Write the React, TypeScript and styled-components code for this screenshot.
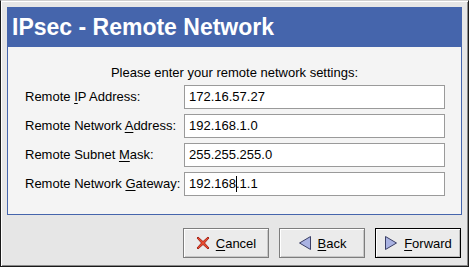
import { Fragment } from 'react';
import styled, { createGlobalStyle } from 'styled-components';

const Global = createGlobalStyle`
  html, body {
    margin: 0;
    padding: 0;
    background: #e6e6e6;
  }
  * {
    box-sizing: border-box;
  }
`;

const Window = styled.div`
  width: 469px;
  height: 267px;
  display: flex;
  flex-direction: column;
  padding: 6px 6px 8px 6px;
  background: #e6e6e6;
  border: 1px solid #1a1a1a;
  border-top-color: #cfcfcf;
  box-shadow: inset 1px 1px 0 #ffffff, inset -1px -1px 0 #8a8a8a;
  font-family: 'Liberation Sans', Arial, sans-serif;
  font-size: 13px;
  color: #000;
`;

const Panel = styled.div`
  height: 209px;
  border: 1px solid #4565ac;
  background: #f4f4f4;
  display: flex;
  flex-direction: column;
`;

const Header = styled.div`
  height: 39px;
  background: #4565ac;
  color: #fff;
  font-family: 'Liberation Sans', Arial, sans-serif;
  font-weight: bold;
  font-size: 23px;
  line-height: 38px;
  padding-left: 4px;
`;

const Prompt = styled.div`
  text-align: center;
  margin-top: 18px;
  line-height: 16px;
`;

const Fields = styled.div`
  display: grid;
  grid-template-columns: 159px 261px;
  row-gap: 5px;
  padding-left: 17px;
  margin-top: 4px;
`;

const Label = styled.div`
  height: 24px;
  line-height: 24px;
  white-space: pre;
`;

const Mnemonic = styled.span`
  text-decoration: underline;
  text-underline-offset: 2px;
`;

const Field = styled.div`
  height: 24px;
  line-height: 22px;
  background: #fff;
  border: 1px solid #9a9a9a;
  padding-left: 4px;
  white-space: pre;
`;

const Caret = styled.span`
  display: inline-block;
  width: 1px;
  height: 16px;
  background: #000;
  margin-right: -1px;
  vertical-align: -4px;
`;

const ButtonRow = styled.div`
  display: flex;
  justify-content: flex-end;
  gap: 10px;
  padding-top: 13px;
  padding-right: 1px;
`;

const Button = styled.div<{ $default?: boolean }>`
  width: 86px;
  height: 30px;
  display: flex;
  align-items: center;
  justify-content: center;
  gap: 6px;
  background: #ebebeb;
  border: 1px solid ${(p) => (p.$default ? '#000' : '#7d7d7d')};
  box-shadow: ${(p) =>
    p.$default
      ? 'inset 1px 1px 0 #fff, inset -1px -1px 0 #bdbdbd'
      : 'inset 1px 1px 0 #fff, inset -1px -1px 0 #c8c8c8'};
`;

const CancelIcon = () => (
  <svg width="14" height="14" viewBox="0 0 14 14">
    <path
      d="M2 1 L7 5.5 L12 1 L13 2 L8.5 7 L13 12 L12 13 L7 8.5 L2 13 L1 12 L5.5 7 L1 2 Z"
      fill="#ef4a2c"
      stroke="#9c1d12"
      strokeWidth="0.9"
      strokeLinejoin="round"
    />
  </svg>
);

const ArrowIcon = ({ dir }: { dir: 'left' | 'right' }) => (
  <svg width="14" height="16" viewBox="0 0 14 16">
    <path
      d={dir === 'left' ? 'M12.5 1.5 L12.5 14.5 L1.5 8 Z' : 'M1.5 1.5 L1.5 14.5 L12.5 8 Z'}
      fill="#a9b2e2"
      stroke="#3a3f66"
      strokeWidth="1"
      strokeLinejoin="round"
    />
  </svg>
);

const rows = [
  { pre: 'Remote ', key: 'I', post: 'P Address:', value: '172.16.57.27' },
  { pre: 'Remote Network ', key: 'A', post: 'ddress:', value: '192.168.1.0' },
  { pre: 'Remote Subnet ', key: 'M', post: 'ask:', value: '255.255.255.0' },
  { pre: 'Remote Network ', key: 'G', post: 'ateway:', value: '192.168.1.1' },
];

const App = () => {
  return (
    <>
      <Global />
      <Window>
        <Panel>
          <Header>IPsec - Remote Network</Header>
          <Prompt>Please enter your remote network settings:</Prompt>
          <Fields>
            {rows.map((r, i) => (
              <Fragment key={i}>
                <Label>
                  {r.pre}
                  <Mnemonic>{r.key}</Mnemonic>
                  {r.post}
                </Label>
                <Field>
                  {i === 3 ? (
                    <>
                      192.168
                      <Caret />
                      .1.1
                    </>
                  ) : (
                    r.value
                  )}
                </Field>
              </Fragment>
            ))}
          </Fields>
        </Panel>
        <ButtonRow>
          <Button>
            <CancelIcon />
            <span>
              <Mnemonic>C</Mnemonic>ancel
            </span>
          </Button>
          <Button>
            <ArrowIcon dir="left" />
            <span>
              <Mnemonic>B</Mnemonic>ack
            </span>
          </Button>
          <Button $default>
            <ArrowIcon dir="right" />
            <span>
              <Mnemonic>F</Mnemonic>orward
            </span>
          </Button>
        </ButtonRow>
      </Window>
    </>
  );
};

export default App;
